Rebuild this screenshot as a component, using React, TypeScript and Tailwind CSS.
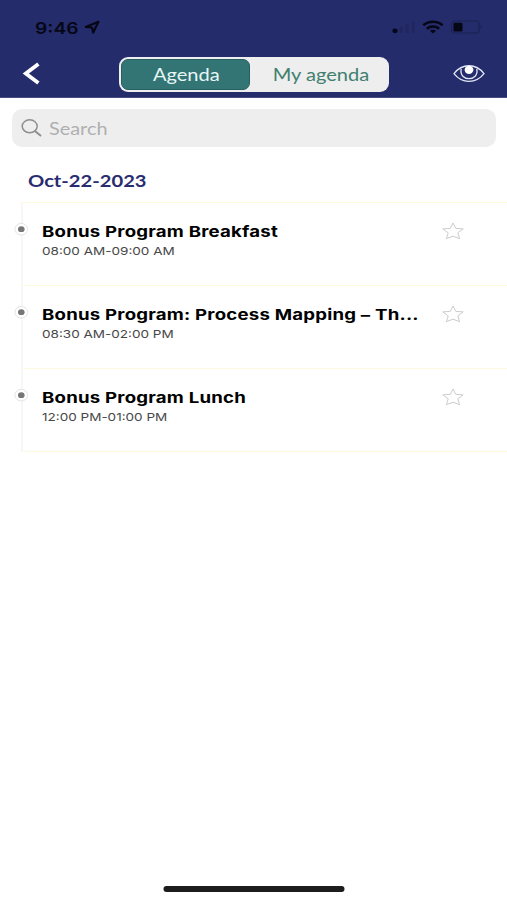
const SESSIONS = [
  { title: 'Bonus Program Breakfast', time: '08:00 AM-09:00 AM' },
  { title: 'Bonus Program: Process Mapping – Th...', time: '08:30 AM-02:00 PM' },
  { title: 'Bonus Program Lunch', time: '12:00 PM-01:00 PM' },
]

function StatusBar() {
  return (
    <div className="h-[54px] pt-[17px] pl-[35px] pr-[23px] flex justify-between text-[#050716]">
      <div className="flex h-5 items-center">
        <span className="w-[49px] pt-px font-['Inter',sans-serif] text-[16px] leading-5 font-semibold whitespace-nowrap">
          <span className="inline-block origin-left scale-x-[1.2]">9:46</span>
        </span>
        <svg width="16" height="14" viewBox="0 0 16 14" fill="none" stroke="currentColor" strokeWidth="2.2" strokeLinejoin="round">
          <path d="M14.4 1.8 L1.8 7 L8 7.5 L9.2 12.4 Z" />
        </svg>
      </div>
      <div className="flex h-5 items-center">
        <svg width="24" height="14" viewBox="0 0 24 14">
          <ellipse cx="3" cy="10.8" rx="2.6" ry="2.4" fill="#050716" />
          <rect x="7.5" y="7" width="3.2" height="6" rx="1" fill="#20275e" />
          <rect x="13.5" y="4" width="3.2" height="9" rx="1" fill="#20275e" />
          <rect x="19.5" y="1.5" width="3.2" height="11.5" rx="1" fill="#20275e" />
        </svg>
        <svg width="22" height="14" viewBox="0 0 22 14" className="ml-1.5" fill="none" stroke="currentColor" strokeWidth="2.6">
          <path d="M1.3 5.3 C6.8 0.6 15.2 0.6 20.7 5.3" />
          <path d="M4.8 8.7 C8.4 5.8 13.6 5.8 17.2 8.7" />
          <path d="M7.9 10.8 Q11 8.8 14.1 10.8 L11 13.6 Z" fill="currentColor" stroke="none" />
        </svg>
        <svg width="34" height="14" viewBox="0 0 34 14" className="ml-[6px]">
          <rect x="1.5" y="1" width="27.5" height="12" rx="3" fill="none" stroke="#1c2253" strokeWidth="1.2" />
          <rect x="3.5" y="2.8" width="9" height="8.6" rx="1.2" fill="#050716" />
          <path d="M30.6 4.8 Q33 7 30.6 9.2 Z" fill="#1c2253" />
        </svg>
      </div>
    </div>
  )
}

function Header() {
  return (
    <header className="h-[98px] bg-[#252c6c] border-b border-[#474c83]">
      <StatusBar />
      <div className="flex pt-[2px] pl-[22px] pr-[22px]">
        <svg width="20" height="36" viewBox="0 0 20 36" fill="none" stroke="#fff" strokeWidth="3.8">
          <path d="M16.4 8 L3.8 17.5 L16.4 27" />
        </svg>
        <div className="ml-[77px] mt-px flex h-[35px] w-[270px] rounded-[9px] bg-[#eeeeee] p-[2px] font-['Lato',sans-serif] text-[17px]">
          <button className="h-[31px] w-[129px] rounded-[7px] border border-[#285f63] bg-[#327574] pl-px text-[#e8f5f5]">
            <span className="inline-block scale-x-[1.18]">Agenda</span>
          </button>
          <button className="h-[31px] flex-1 pl-[5px] text-[#41806f]">
            <span className="inline-block scale-x-[1.18] whitespace-nowrap">My agenda</span>
          </button>
        </div>
        <svg width="32" height="20" viewBox="0 0 32 20" className="ml-auto mt-[8px]" fill="none" stroke="#e4e7f5" strokeWidth="1.3">
          <path d="M1 9.6 C9 -0.9 23 -0.9 31 9.6 C23 19.9 9 19.9 1 9.6 Z" />
          <path d="M8.2 4.8 C5.5 18 26.5 18 23.8 4.8" />
          <ellipse cx="16" cy="5.8" rx="4.4" ry="4.1" fill="#fff" stroke="none" />
        </svg>
      </div>
    </header>
  )
}

function SearchBox() {
  return (
    <div className="ml-3 mr-[11px] mt-[11px] flex h-[38px] items-center rounded-[10px] bg-[#eeeeee] pl-[9px]">
      <svg width="21" height="18" viewBox="0 0 21 18" fill="none" stroke="#8e8e8e" strokeWidth="1.5">
        <ellipse cx="8.7" cy="7.3" rx="7.5" ry="6.5" />
        <path d="M14 12 L20 17" strokeWidth="1.9" />
      </svg>
      <span className="ml-[7px] mt-[2px] origin-left scale-x-[1.17] font-['Lato',sans-serif] text-[17px] leading-5 text-[#b0b0b0]">Search</span>
    </div>
  )
}

function SessionRow({ title, time }: { title: string; time: string }) {
  return (
    <li className="flex h-[83px] border-b border-[#fcf9de]">
      <svg width="14" height="14" viewBox="0 0 14 14" className="-ml-[9px] mt-[19px] shrink-0">
        <ellipse cx="7.3" cy="7.2" rx="6.4" ry="5.8" fill="#fff" stroke="#e4e4e4" />
        <ellipse cx="7.3" cy="7.2" rx="3.3" ry="2.9" fill="#777" />
      </svg>
      <div className="ml-[14px] w-[400px] pt-[19px] font-['Inter',sans-serif] whitespace-nowrap">
        <div className="h-[19px] text-[15px] leading-5 font-bold tracking-[0.18px] text-black">
          <span className="inline-block origin-left scale-x-[1.24]">{title}</span>
        </div>
        <div className="h-5 text-[11px] leading-5 text-[#484848]">
          <span className="inline-block origin-left scale-x-[1.23]">{time}</span>
        </div>
      </div>
      <svg width="22" height="18" viewBox="0 0 22 18" className="mt-[19px] shrink-0" fill="none" stroke="#cccccc" strokeWidth="1">
        <path d="M11 1 L13.8 6.4 L21.2 6.9 L15.8 10.8 L17.6 16.7 L11 14.2 L4.4 16.7 L6.2 10.8 L0.8 6.9 L8.2 6.4 Z" />
      </svg>
    </li>
  )
}

export default function App() {
  return (
    <div className="flex h-[900px] w-[507px] flex-col overflow-hidden bg-white">
      <Header />
      <SearchBox />
      <h2 className="mt-[24px] ml-[28px] h-5 font-['Lato',sans-serif] text-[17px] leading-5 font-bold text-[#292d70]">
        <span className="inline-block origin-left scale-x-[1.185]">Oct-22-2023</span>
      </h2>
      <ul className="mt-[11px] ml-[21px] border-t border-l-2 border-t-[#fcf9de] border-l-[#f7f7f7]">
        {SESSIONS.map((s) => (
          <SessionRow key={s.title} title={s.title} time={s.time} />
        ))}
      </ul>
      <div className="mx-auto mt-auto mb-[8px] h-[6px] w-[181px] translate-x-[0.5px] rounded-full bg-[#1d1d1d]" />
    </div>
  )
}
